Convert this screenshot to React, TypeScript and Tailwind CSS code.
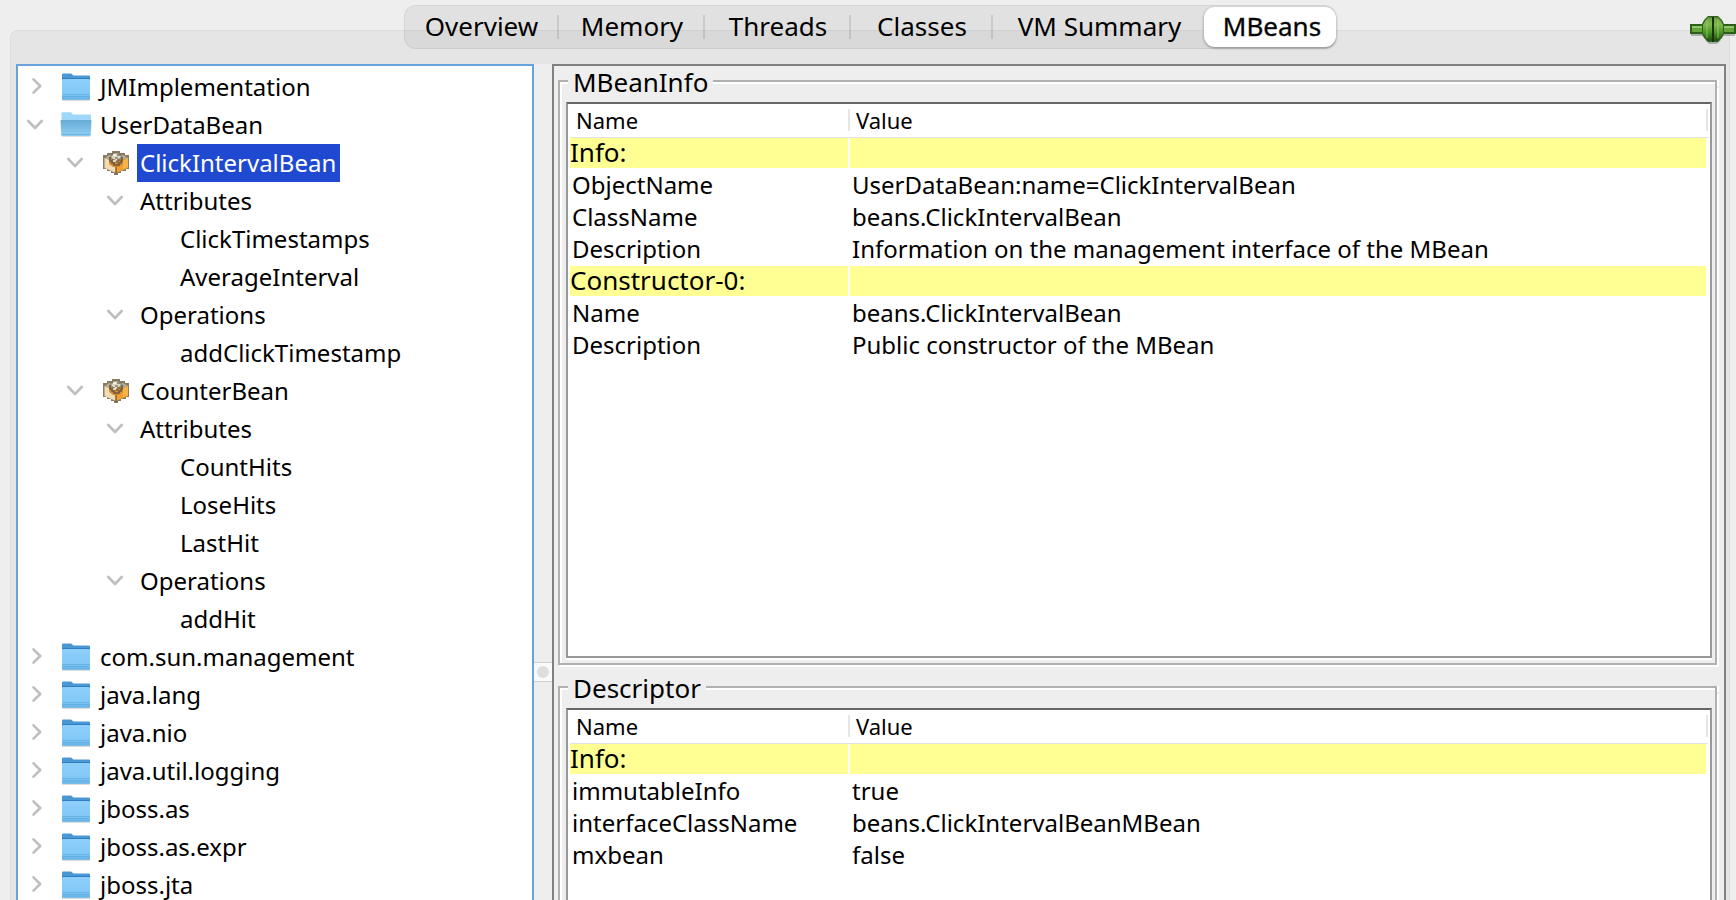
import { useId, type ReactNode } from "react";

type NodeIcon = "folder" | "folder-open" | "bean";

interface TreeNode {
  label: string;
  icon?: NodeIcon;
  expanded?: boolean;
  selected?: boolean;
  children?: TreeNode[];
}

interface InfoRow {
  name: string;
  value?: string;
  section?: boolean;
}

const tabs = [
  { label: "Overview", width: "w-[155px]" },
  { label: "Memory", width: "w-[146px]" },
  { label: "Threads", width: "w-[146px]" },
  { label: "Classes", width: "w-[142px]" },
  { label: "VM Summary", width: "w-[211px]" },
  { label: "MBeans", width: "w-[132px]" },
];

const folder = (label: string): TreeNode => ({ label, icon: "folder", expanded: false });

const tree: TreeNode[] = [
  folder("JMImplementation"),
  {
    label: "UserDataBean",
    icon: "folder-open",
    expanded: true,
    children: [
      {
        label: "ClickIntervalBean",
        icon: "bean",
        expanded: true,
        selected: true,
        children: [
          {
            label: "Attributes",
            expanded: true,
            children: [{ label: "ClickTimestamps" }, { label: "AverageInterval" }],
          },
          { label: "Operations", expanded: true, children: [{ label: "addClickTimestamp" }] },
        ],
      },
      {
        label: "CounterBean",
        icon: "bean",
        expanded: true,
        children: [
          {
            label: "Attributes",
            expanded: true,
            children: [{ label: "CountHits" }, { label: "LoseHits" }, { label: "LastHit" }],
          },
          { label: "Operations", expanded: true, children: [{ label: "addHit" }] },
        ],
      },
    ],
  },
  folder("com.sun.management"),
  folder("java.lang"),
  folder("java.nio"),
  folder("java.util.logging"),
  folder("jboss.as"),
  folder("jboss.as.expr"),
  folder("jboss.jta"),
];

const beanInfo: InfoRow[] = [
  { name: "Info:", section: true },
  { name: "ObjectName", value: "UserDataBean:name=ClickIntervalBean" },
  { name: "ClassName", value: "beans.ClickIntervalBean" },
  { name: "Description", value: "Information on the management interface of the MBean" },
  { name: "Constructor-0:", section: true },
  { name: "Name", value: "beans.ClickIntervalBean" },
  { name: "Description", value: "Public constructor of the MBean" },
];

const descriptor: InfoRow[] = [
  { name: "Info:", section: true },
  { name: "immutableInfo", value: "true" },
  { name: "interfaceClassName", value: "beans.ClickIntervalBeanMBean" },
  { name: "mxbean", value: "false" },
];

function Chevron({ open }: { open: boolean }) {
  return (
    <svg width="18" height="18" viewBox="0 0 18 18" fill="none" stroke="#bfbfbf" strokeWidth="2.6" strokeLinecap="round" strokeLinejoin="round" aria-hidden="true">
      <path d={open ? "M1.3 5 L8 12 L14.7 5" : "M6.5 1.3 L13.2 8 L6.5 14.7"} />
    </svg>
  );
}

function FolderIcon() {
  return (
    <svg width="32" height="30" viewBox="0 0 32 30" aria-hidden="true">
      <defs>
        <linearGradient id="folder-front" x1="0" y1="0" x2="0" y2="1">
          <stop offset="0" stopColor="#8fd0fb" />
          <stop offset="0.75" stopColor="#81c7f6" />
          <stop offset="1" stopColor="#5fb0e6" />
        </linearGradient>
      </defs>
      <path d="M2 27.5h28v1H2z" fill="#000" opacity="0.28" />
      <path d="M2 2.5q0-1 1-1h7.500q1 0 1.800 1l1.200 1H29q1 0 1 1V9H2z" fill="#4a97d2" />
      <path d="M2 6h28v3H2z" fill="#2f7cc9" />
      <path d="M2 8.2q0-1.2 1.2-1.2h25.6q1.2 0 1.2 1.2V27q0 .8-.8.8H2.8Q2 27.800 2 27z" fill="url(#folder-front)" />
      <path d="M2.500 22.500h27M2.500 24.500h27" stroke="#5ba9dd" strokeWidth="0.700" />
    </svg>
  );
}

function OpenFolderIcon() {
  return (
    <svg width="32" height="30" viewBox="0 0 32 30" aria-hidden="true">
      <defs>
        <linearGradient id="folder-open-front" x1="0" y1="0" x2="0" y2="1">
          <stop offset="0" stopColor="#66acd4" />
          <stop offset="1" stopColor="#90cff5" />
        </linearGradient>
      </defs>
      <path d="M2 25.500h28v1H2z" fill="#000" opacity="0.25" />
      <path d="M1.500 3.500q0-1.200 1.200-1.200h7.600q1 0 1.700 1l.9 1.200h17q1 0 1 1V11H1.500z" fill="#9fd7fa" />
      <path d="M1 10h30q.6 0 .5.7L30.700 25q-.1.900-1 .9H2.300q-.9 0-1-.9L.5 10.700Q.5 10 1 10z" fill="url(#folder-open-front)" />
      <path d="M1.500 24.600h29" stroke="#63addb" strokeWidth="0.800" />
    </svg>
  );
}

function BeanIcon() {
  return (
    <svg width="28" height="26" viewBox="0 0 28 26" aria-hidden="true">
      <path d="M10 1h8v2h5v2h4v14h-3v2h-5v2h-3v2h-4v-2H9v-2H5v-2H1V5h4V3h5z" fill="#8a7a62" />
      <path d="M3 8l4-3h14l5 3-12 6z" fill="#b5ab95" />
      <path d="M2.500 8 L14 13 V23 L2.500 18z" fill="#f3dcb4" />
      <path d="M26 8 L14 13 V23 L26 18z" fill="#f0a02c" />
      <path d="M21 11l5-3v9l-5 2z" fill="#f7b347" />
      <path d="M7 9h14v5l-4 3h-6l-4-3z" fill="#d98e2e" />
      <path d="M11 3h6v2h2v4h-2v2h-6V9H9V5h2z" fill="#ddd7c5" stroke="#7d7563" strokeWidth="1" />
      <path d="M8 7v4h2v2h2v2h5v-2h2v-2h1V7" fill="none" stroke="#695945" strokeWidth="1.600" />
      <path d="M10 10h2v2h4v-2h2" fill="none" stroke="#8a6a38" strokeWidth="1.600" />
      <path d="M15 5h3M13 8h3" stroke="#877d69" strokeWidth="1.500" />
      <path d="M11 5h3M11 11h3" stroke="#fbf7ea" strokeWidth="1.600" />
      <path d="M14 17 V24" stroke="#7a603a" strokeWidth="1.500" />
    </svg>
  );
}

function ConnectedIcon() {
  return (
    <svg width="46" height="28" viewBox="0 0 46 28" aria-hidden="true">
      <defs>
        <linearGradient id="plug-body" x1="0" y1="0" x2="0" y2="1">
          <stop offset="0" stopColor="#6f9c44" />
          <stop offset="0.3" stopColor="#80b84e" />
          <stop offset="0.65" stopColor="#4c9426" />
          <stop offset="1" stopColor="#234f12" />
        </linearGradient>
      </defs>
      <path d="M1 18h44v2H1zM15 24l4 4h8l4-4z" fill="#000" opacity="0.25" />
      <path d="M0 8h46v10H0z" fill="#2c5f17" />
      <path d="M2 10h42v6H2z" fill="#64a33c" />
      <path d="M2 10h42v2H2z" fill="#94c46c" />
      <path d="M18 0h10l4 4 2 4v10l-2 4-4 4H18l-4-4-2-4V8l2-4z" fill="#2f6519" />
      <path d="M18 1.500h4v23h-4l-3-3-2-4V9l2-4zM24 1.500h4l3 3.500 2 4v8.500l-2 4-3 3h-4z" fill="url(#plug-body)" />
      <path d="M17 4v18M28 4v18" stroke="#9dcc74" strokeWidth="1.500" opacity="0.55" />
      <path d="M23 1v25" stroke="#17350b" strokeWidth="2" />
    </svg>
  );
}

function NodeGlyph({ icon }: { icon: NodeIcon }) {
  if (icon === "folder") return <FolderIcon />;
  if (icon === "folder-open") return <OpenFolderIcon />;
  return <BeanIcon />;
}

function TreeItem({ node }: { node: TreeNode }) {
  return (
    <li role="treeitem" aria-expanded={node.expanded} aria-selected={!!node.selected}>
      <button type="button" className="flex h-[38px] items-center whitespace-nowrap">
        <span className="flex w-9 shrink-0 justify-center">
          {node.expanded !== undefined && <Chevron open={node.expanded} />}
        </span>
        {node.icon ? (
          <span className="flex w-[43px] shrink-0 justify-center">
            <NodeGlyph icon={node.icon} />
          </span>
        ) : (
          <span className="w-[3px] shrink-0" />
        )}
        <span className={node.selected ? "bg-[#1f49d1] pr-1 pl-[3px] leading-[38px] text-white" : "pr-1 pl-[3px] leading-[38px]"}>
          {node.label}
        </span>
      </button>
      {node.children && (
        <ul role="group" className="pl-10">
          {node.children.map((child) => (
            <TreeItem key={child.label} node={child} />
          ))}
        </ul>
      )}
    </li>
  );
}

function InfoTable({ rows, labelledBy }: { rows: InfoRow[]; labelledBy: string }) {
  return (
    <table aria-labelledby={labelledBy} className="w-full table-fixed border-separate border-spacing-0 text-left">
      <colgroup>
        <col className="w-[280px]" />
        <col />
      </colgroup>
      <thead>
        <tr className="h-[34px] text-[22px] leading-[22px]">
          {["Name", "Value"].map((title) => (
            <th key={title} scope="col" className="border-b border-[#e2e2e2] p-0 pb-[2px] font-normal">
              <div className="border-r-2 border-[#e6e6e6] pl-[6px]">{title}</div>
            </th>
          ))}
        </tr>
      </thead>
      <tbody>
        {rows.map((row, index) =>
          row.section ? (
            <tr key={index} className="text-[26px]">
              <td className="p-0">
                <div className="mr-[2px] mb-[2px] h-[30px] bg-[#ffff93] leading-[28px]">{row.name}</div>
              </td>
              <td className="p-0">
                <div className="mr-[2px] mb-[2px] h-[30px] bg-[#ffff93]" />
              </td>
            </tr>
          ) : (
            <tr key={index} className="h-8 text-[24px] leading-[30px] whitespace-nowrap">
              <td className="p-0 pb-[2px] pl-[2px]">{row.name}</td>
              <td className="p-0 pb-[2px] pl-[2px]">{row.value}</td>
            </tr>
          ),
        )}
      </tbody>
    </table>
  );
}

function TitledPanel({ title, className, children }: { title: string; className: string; children: (id: string) => ReactNode }) {
  const id = useId();
  return (
    <section className={`flex flex-col ${className}`}>
      <div className="flex h-5 items-start">
        <div className="mt-[14px] h-[6px] w-[10px] border-t-2 border-l-2 border-[#b0b0b0]">
          <div className="h-1 border-t-2 border-l-2 border-white" />
        </div>
        <h2 id={id} className="px-[5px] text-[26px] leading-[32px]">
          {title}
        </h2>
        <div className="mt-[14px] h-[6px] grow border-t-2 border-r-2 border-[#b0b0b0] shadow-[2px_0_0_#fff]">
          <div className="border-t-2 border-white" />
        </div>
      </div>
      <div className="flex grow flex-col border-r-2 border-b-2 border-l-2 border-[#b0b0b0] shadow-[2px_2px_0_#fff]">
        <div className="flex grow flex-col border-l-2 border-white pt-4 pr-[3px] pb-[5px] pl-1">
          <div className="grow border-2 border-[#999] border-t-[#666] bg-white px-[2px] shadow-[0_2px_0_#fff]">
            {children(id)}
          </div>
        </div>
      </div>
    </section>
  );
}

export default function App() {
  return (
    <div className="relative flex h-screen flex-col overflow-hidden bg-[#eeeeee] pr-[6px] pl-[10px] font-['Noto_Sans','Open_Sans',sans-serif] text-[24px] text-black">
      <div role="tablist" aria-label="Monitoring views" className="z-10 mx-auto mt-[5px] flex h-11 shrink-0 rounded-xl bg-black/5 text-[26px] inset-ring inset-ring-black/5">
        {tabs.map((tab, index) =>
          index === tabs.length - 1 ? (
            <button key={tab.label} type="button" role="tab" aria-selected="true" className={`${tab.width} my-[2px] rounded-[11px] bg-white pb-[2px] pl-1 leading-[36px] shadow-[0_1px_3px_rgba(0,0,0,0.4)] [-webkit-text-stroke:0.4px_#222]`}>
              {tab.label}
            </button>
          ) : (
            <button key={tab.label} type="button" role="tab" aria-selected="false" className={`${tab.width} flex items-center leading-[36px]`}>
              <span className="grow pb-[2px] pl-[2px] text-center">{tab.label}</span>
              {index < tabs.length - 2 && <span className="h-6 w-[2px] bg-black/10" />}
            </button>
          ),
        )}
      </div>
      <div className="absolute top-4 right-0 z-20">
        <ConnectedIcon />
      </div>

      <main className="-mt-[19px] flex min-h-0 grow rounded-t-lg border border-b-0 border-[#dcdcdc] bg-[#e5e5e5] pt-[33px] pr-[3px] pl-[5px]">
        <nav aria-label="MBeans" className="w-[518px] shrink-0 overflow-hidden border-2 border-b-0 border-[#68a3e0] bg-white pt-[2px]">
          <ul role="tree">
            {tree.map((node) => (
              <TreeItem key={node.label} node={node} />
            ))}
          </ul>
        </nav>
        <div role="separator" aria-orientation="vertical" className="w-[18px] shrink-0 bg-[#eeeeee] pt-[598px]">
          <div className="flex h-5 items-center justify-center border-y border-[#cfcfcf] bg-[#fafafa]">
            <span className="size-3 rounded-full bg-[#dedede]" />
          </div>
        </div>
        <div className="flex min-w-0 grow flex-col overflow-hidden border-2 border-b-0 border-[#808080] bg-[#eeeeee] pr-[7px] pl-1">
          <TitledPanel title="MBeanInfo" className="min-h-[599px] shrink-0">
            {(id) => <InfoTable rows={beanInfo} labelledBy={id} />}
          </TitledPanel>
          <TitledPanel title="Descriptor" className="mt-[7px] min-h-[599px] shrink-0">
            {(id) => <InfoTable rows={descriptor} labelledBy={id} />}
          </TitledPanel>
        </div>
      </main>
    </div>
  );
}
